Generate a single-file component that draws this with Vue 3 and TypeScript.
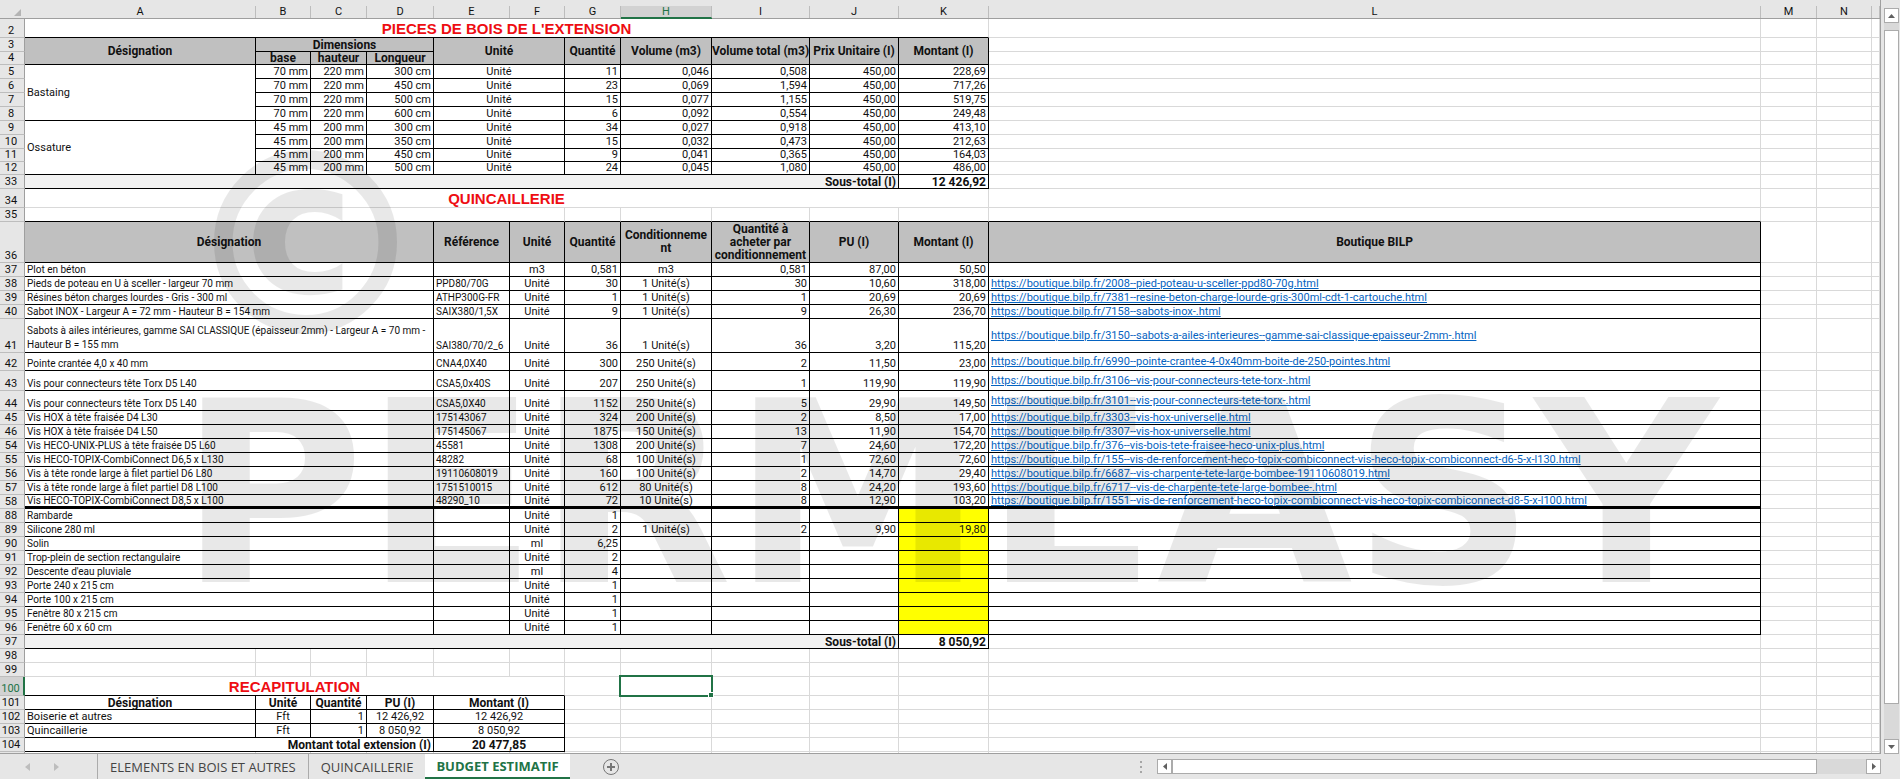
<script setup lang="ts">
import { ref } from 'vue'

interface Cell {
  t?: string
  href?: boolean
  cs?: number
  rs?: number
  c?: string
}

interface Row {
  n: number
  h: number
  cells: Cell[]
}

const columns = ['A', 'B', 'C', 'D', 'E', 'F', 'G', 'H', 'I', 'J', 'K', 'L', 'M', 'N', '']
const base = 'https://boutique.bilp.fr/'

const blank = (count: number, c = ''): Cell[] => Array.from({ length: count }, () => ({ c }))
const tail = (): Cell[] => blank(3)
const head = (t: string, extra: Cell = {}): Cell => ({ t, c: 'k head', ...extra })

const rows: Row[] = []

rows.push({ n: 2, h: 19, cells: [{ t: "PIECES DE BOIS DE L'EXTENSION", cs: 11, c: 'title kb' }, ...blank(4)] })
rows.push({
  n: 3,
  h: 14,
  cells: [
    head('Désignation', { rs: 2 }),
    head('Dimensions', { cs: 3 }),
    head('Unité', { cs: 2, rs: 2 }),
    head('Quantité', { rs: 2 }),
    head('Volume (m3)', { rs: 2 }),
    head('Volume total (m3)', { rs: 2 }),
    head('Prix Unitaire (I)', { rs: 2 }),
    head('Montant (I)', { rs: 2 }),
    ...blank(4),
  ],
})
rows.push({ n: 4, h: 13, cells: [head('base'), head('hauteur'), head('Longueur'), ...blank(4)] })

const timber: [number, number, string[]][] = [
  [5, 14, ['70 mm', '220 mm', '300 cm', '11', '0,046', '0,508', '450,00', '228,69']],
  [6, 14, ['70 mm', '220 mm', '450 cm', '23', '0,069', '1,594', '450,00', '717,26']],
  [7, 14, ['70 mm', '220 mm', '500 cm', '15', '0,077', '1,155', '450,00', '519,75']],
  [8, 14, ['70 mm', '220 mm', '600 cm', '6', '0,092', '0,554', '450,00', '249,48']],
  [9, 14, ['45 mm', '200 mm', '300 cm', '34', '0,027', '0,918', '450,00', '413,10']],
  [10, 14, ['45 mm', '200 mm', '350 cm', '15', '0,032', '0,473', '450,00', '212,63']],
  [11, 13, ['45 mm', '200 mm', '450 cm', '9', '0,041', '0,365', '450,00', '164,03']],
  [12, 13, ['45 mm', '200 mm', '500 cm', '24', '0,045', '1,080', '450,00', '486,00']],
]
for (const [n, h, v] of timber) {
  const cells: Cell[] = []
  if (n === 5) cells.push({ t: 'Bastaing', rs: 4, c: 'k mid' })
  if (n === 9) cells.push({ t: 'Ossature', rs: 4, c: 'k mid' })
  v.forEach((t, i) => {
    if (i === 3) cells.push({ t: 'Unité', cs: 2, c: 'k ctr' })
    cells.push({ t, c: 'k num' })
  })
  rows.push({ n, h, cells: [...cells, ...blank(4)] })
}

const subtotal = (n: number, amount: string): Row => ({
  n,
  h: 14,
  cells: [{ t: 'Sous-total (I)', cs: 10, c: 'k num bold shade' }, { t: amount, c: 'k num bold' }, ...blank(4)],
})
rows.push(subtotal(33, '12 426,92'))
rows.push({ n: 34, h: 19, cells: [{ t: 'QUINCAILLERIE', cs: 11, c: 'title' }, ...blank(4)] })
rows.push({ n: 35, h: 14, cells: [{ cs: 6, c: 'kb' }, ...blank(6, 'kb'), ...tail()] })
rows.push({
  n: 36,
  h: 41,
  cells: [
    head('Désignation', { cs: 4 }),
    head('Référence'),
    head('Unité'),
    head('Quantité'),
    head('Conditionneme\nnt', { c: 'k head tall' }),
    head('Quantité à\nacheter par\nconditionnement', { c: 'k head tall' }),
    head('PU (I)'),
    head('Montant (I)'),
    head('Boutique BILP'),
    ...tail(),
  ],
})

const hardware: [number, number, ...string[]][] = [
  [37, 14, 'Plot en béton', '', 'm3', '0,581', 'm3', '0,581', '87,00', '50,50', ''],
  [38, 14, 'Pieds de poteau en U à sceller - largeur 70 mm', 'PPD80/70G', 'Unité', '30', '1 Unité(s)', '30', '10,60', '318,00', '2008--pied-poteau-u-sceller-ppd80-70g.html'],
  [39, 14, 'Résines béton charges lourdes - Gris - 300 ml', 'ATHP300G-FR', 'Unité', '1', '1 Unité(s)', '1', '20,69', '20,69', '7381--resine-beton-charge-lourde-gris-300ml-cdt-1-cartouche.html'],
  [40, 14, 'Sabot INOX - Largeur A = 72 mm - Hauteur B = 154 mm', 'SAIX380/1,5X', 'Unité', '9', '1 Unité(s)', '9', '26,30', '236,70', '7158--sabots-inox-.html'],
  [41, 34, 'Sabots à ailes intérieures, gamme SAI CLASSIQUE (épaisseur 2mm) - Largeur A = 70 mm -\nHauteur B = 155 mm', 'SAI380/70/2_6', 'Unité', '36', '1 Unité(s)', '36', '3,20', '115,20', '3150--sabots-a-ailes-interieures--gamme-sai-classique-epaisseur-2mm-.html'],
  [42, 18, 'Pointe crantée 4,0 x 40 mm', 'CNA4,0X40', 'Unité', '300', '250 Unité(s)', '2', '11,50', '23,00', '6990--pointe-crantee-4-0x40mm-boite-de-250-pointes.html'],
  [43, 20, 'Vis pour connecteurs tête Torx D5 L40', 'CSA5,0x40S', 'Unité', '207', '250 Unité(s)', '1', '119,90', '119,90', '3106--vis-pour-connecteurs-tete-torx-.html'],
  [44, 20, 'Vis pour connecteurs tête Torx D5 L40', 'CSA5,0X40', 'Unité', '1152', '250 Unité(s)', '5', '29,90', '149,50', '3101--vis-pour-connecteurs-tete-torx-.html'],
  [45, 14, 'Vis HOX à tête fraisée D4 L30', '175143067', 'Unité', '324', '200 Unité(s)', '2', '8,50', '17,00', '3303--vis-hox-universelle.html'],
  [46, 14, 'Vis HOX à tête fraisée D4 L50', '175145067', 'Unité', '1875', '150 Unité(s)', '13', '11,90', '154,70', '3307--vis-hox-universelle.html'],
  [54, 14, 'Vis HECO-UNIX-PLUS à tête fraisée D5 L60', '45581', 'Unité', '1308', '200 Unité(s)', '7', '24,60', '172,20', '376--vis-bois-tete-fraisee-heco-unix-plus.html'],
  [55, 14, 'Vis HECO-TOPIX-CombiConnect D6,5 x L130', '48282', 'Unité', '68', '100 Unité(s)', '1', '72,60', '72,60', '155--vis-de-renforcement-heco-topix-combiconnect-vis-heco-topix-combiconnect-d6-5-x-l130.html'],
  [56, 14, 'Vis à tête ronde large à filet partiel D6 L80', '19110608019', 'Unité', '160', '100 Unité(s)', '2', '14,70', '29,40', '6687--vis-charpente-tete-large-bombee-19110608019.html'],
  [57, 14, 'Vis à tête ronde large à filet partiel D8 L100', '1751510015', 'Unité', '612', '80 Unité(s)', '8', '24,20', '193,60', '6717--vis-de-charpente-tete-large-bombee-.html'],
  [58, 14, 'Vis HECO-TOPIX-CombiConnect D8,5 x L100', '48290_10', 'Unité', '72', '10 Unité(s)', '8', '12,90', '103,20', '1551--vis-de-renforcement-heco-topix-combiconnect-vis-heco-topix-combiconnect-d8-5-x-l100.html'],
  [88, 14, 'Rambarde', '', 'Unité', '1', '', '', '', '', ''],
  [89, 14, 'Silicone 280 ml', '', 'Unité', '2', '1 Unité(s)', '2', '9,90', '19,80', ''],
  [90, 14, 'Solin', '', 'ml', '6,25', '', '', '', '', ''],
  [91, 14, 'Trop-plein de section rectangulaire', '', 'Unité', '2', '', '', '', '', ''],
  [92, 14, "Descente d'eau pluviale", '', 'ml', '4', '', '', '', '', ''],
  [93, 14, 'Porte 240 x 215 cm', '', 'Unité', '1', '', '', '', '', ''],
  [94, 14, 'Porte 100 x 215 cm', '', 'Unité', '1', '', '', '', '', ''],
  [95, 14, 'Fenêtre 80 x 215 cm', '', 'Unité', '1', '', '', '', '', ''],
  [96, 14, 'Fenêtre 60 x 60 cm', '', 'Unité', '1', '', '', '', '', ''],
]
for (const [n, h, ...v] of hardware) {
  const k = n === 58 ? 'k thick' : 'k'
  const [name, code, unit, qty, pack, buy, pu, sum, link] = v
  rows.push({
    n,
    h,
    cells: [
      { t: name, cs: 4, c: k + ' name' + (n === 41 ? ' wrap' : '') },
      { t: code, c: k + ' name' },
      { t: unit, c: k + ' ctr' },
      { t: qty, c: k + ' num' },
      { t: pack, c: k + ' ctr' },
      { t: buy, c: k + ' num' },
      { t: pu, c: k + ' num' },
      { t: sum, c: k + ' num' + (n >= 88 ? ' yellow' : '') },
      link ? { t: base + link, href: true, c: k + ' mid' } : { c: k },
      ...tail(),
    ],
  })
}

rows.push(subtotal(97, '8 050,92'))
rows.push({ n: 98, h: 14, cells: blank(15) })
rows.push({ n: 99, h: 14, cells: blank(15) })
rows.push({ n: 100, h: 19, cells: [{ t: 'RECAPITULATION', cs: 6, c: 'title kb' }, {}, { c: 'active' }, ...blank(7)] })
rows.push({
  n: 101,
  h: 14,
  cells: [
    ...['Désignation', 'Unité', 'Quantité', 'PU (I)'].map((t) => ({ t, c: 'k ctr bold' })),
    { t: 'Montant (I)', cs: 2, c: 'k ctr bold' },
    ...blank(9),
  ],
})
for (const [n, name, sum] of [
  [102, 'Boiserie et autres', '12 426,92'],
  [103, 'Quincaillerie', '8 050,92'],
] as [number, string, string][]) {
  rows.push({
    n,
    h: 14,
    cells: [
      { t: name, c: 'k' },
      { t: 'Fft', c: 'k ctr' },
      { t: '1', c: 'k num' },
      { t: sum, c: 'k ctr' },
      { t: sum, cs: 2, c: 'k ctr' },
      ...blank(9),
    ],
  })
}
rows.push({
  n: 104,
  h: 14,
  cells: [
    { t: 'Montant total extension (I)', cs: 4, c: 'k num bold' },
    { t: '20 477,85', cs: 2, c: 'k ctr bold' },
    ...blank(9),
  ],
})

const tabs = ['ELEMENTS EN BOIS ET AUTRES', 'QUINCAILLERIE', 'BUDGET ESTIMATIF']
const current = ref('BUDGET ESTIMATIF')
</script>

<template>
  <div class="book">
    <div class="work">
      <div class="grid">
        <table>
          <colgroup>
            <col class="w-row" />
            <col v-for="(c, i) in columns" :key="i" :class="'w-' + (c || 'rest')" />
          </colgroup>
          <thead>
            <tr>
              <td class="corner">
                <svg width="7" height="7" viewBox="0 0 7 7"><path d="M7 0V7H0Z" fill="#b4b4b4" /></svg>
              </td>
              <th v-for="(c, i) in columns" :key="i" scope="col" :class="{ on: c === 'H' }">
                <span>{{ c }}</span>
              </th>
            </tr>
          </thead>
          <tbody>
            <tr v-for="r in rows" :key="r.n" :style="{ height: r.h + 'px' }">
              <th scope="row" :class="{ on: r.n === 100 }">{{ r.n }}</th>
              <td v-for="(c, i) in r.cells" :key="i" :colspan="c.cs" :rowspan="c.rs" :class="c.c">
                <a v-if="c.href" :href="c.t">{{ c.t }}</a>
                <template v-else>{{ c.t }}</template>
              </td>
            </tr>
            <tr class="last">
              <th></th>
              <td v-for="i in 15" :key="i"></td>
            </tr>
          </tbody>
        </table>
        <div class="mark copy">©</div>
        <div class="mark word">PERMEASY</div>
      </div>
      <div class="vbar">
        <button aria-label="Haut"><svg width="7" height="4" viewBox="0 0 7 4"><path d="M0 4L3.5 0L7 4Z" /></svg></button>
        <div class="track"><div class="thumb"></div></div>
        <button aria-label="Bas"><svg width="7" height="4" viewBox="0 0 7 4"><path d="M0 0L3.5 4L7 0Z" /></svg></button>
      </div>
    </div>
    <div class="foot">
      <div class="arrows">
        <button aria-label="Feuille précédente"><svg width="5" height="8" viewBox="0 0 5 8"><path d="M5 0L0 4L5 8Z" /></svg></button>
        <button aria-label="Feuille suivante"><svg width="5" height="8" viewBox="0 0 5 8"><path d="M0 0L5 4L0 8Z" /></svg></button>
      </div>
      <nav>
        <button v-for="t in tabs" :key="t" class="tab" :class="{ sel: t === current }" @click="current = t">{{ t }}</button>
      </nav>
      <button class="add" aria-label="Nouvelle feuille">
        <svg width="18" height="18" viewBox="0 0 18 18" fill="none" stroke="#767676">
          <circle cx="9" cy="9" r="7.5" />
          <path d="M9 5V13M5 9H13" stroke-width="2" />
        </svg>
      </button>
      <div class="hbar">
        <svg class="grip" width="2" height="12" viewBox="0 0 2 12" fill="#a6a6a6"><path d="M0 0h2v2H0zM0 5h2v2H0zM0 10h2v2H0z" /></svg>
        <button aria-label="Gauche"><svg width="4" height="7" viewBox="0 0 4 7"><path d="M4 0L0 3.5L4 7Z" /></svg></button>
        <div class="track"><div class="thumb"></div></div>
        <button aria-label="Droite"><svg width="4" height="7" viewBox="0 0 4 7"><path d="M0 0L4 3.5L0 7Z" /></svg></button>
      </div>
    </div>
  </div>
</template>

<style>
body {
  margin: 0;
}
</style>

<style scoped>
.book {
  display: flex;
  flex-direction: column;
  height: 100vh;
  overflow: hidden;
  background: #e6e6e6;
  font-family: Roboto, sans-serif;
  font-size: 11px;
  line-height: 12px;
  color: #111;
}
button {
  margin: 0;
  padding: 0;
  border: 0;
  background: none;
  font: inherit;
  color: inherit;
  display: flex;
  align-items: center;
  justify-content: center;
}
.work {
  flex: 1;
  min-height: 0;
  display: flex;
}
.grid {
  flex: 1;
  min-width: 0;
  position: relative;
  overflow: hidden;
  border-right: 1px solid #9f9f9f;
  border-bottom: 1px solid #9f9f9f;
  box-sizing: border-box;
}
table {
  width: 100%;
  table-layout: fixed;
  border-collapse: separate;
  border-spacing: 0;
  background: #fff;
}
.w-row { width: 25px; }
.w-A { width: 231px; }
.w-B, .w-F, .w-N { width: 55px; }
.w-C, .w-G, .w-M { width: 56px; }
.w-D { width: 67px; }
.w-E { width: 76px; }
.w-H { width: 91px; }
.w-I { width: 98px; }
.w-J { width: 89px; }
.w-K { width: 90px; }
.w-rest { width: 8px; }

td,
th {
  box-sizing: border-box;
  padding: 0 2px;
  border-right: 1px solid #d9d9d9;
  border-bottom: 1px solid #d9d9d9;
  vertical-align: bottom;
  white-space: nowrap;
  font-weight: 400;
}
thead tr {
  height: 19px;
}
thead th,
thead td {
  padding: 6px 0 0;
  background: #e6e6e6;
  border-right: 0;
  border-bottom-color: #9f9f9f;
}
thead th span {
  display: block;
  height: 12px;
  border-right: 1px solid #bdbdbd;
}
thead .on {
  background: linear-gradient(#e6e6e6 6px, #d2d2d2 6px);
  border-bottom-color: #217346;
  color: #217346;
}
thead .on span {
  box-sizing: border-box;
  border-bottom: 1px solid #217346;
}
.corner svg {
  display: block;
  margin: 0 4px 2px auto;
}
tbody th {
  padding: 0 2px 0 0;
  background: #e6e6e6;
  border-right-color: #9f9f9f;
  border-bottom-color: #bdbdbd;
  text-align: center;
}
tbody th.on {
  background: #d2d2d2;
  border-right: 2px solid #217346;
  color: #217346;
}
.k {
  border-color: #000;
}
.kb {
  border-bottom-color: #000;
}
.head {
  padding: 0;
  background: #c0c0c0;
  text-align: center;
  vertical-align: middle;
  font-size: 12px;
  font-weight: 700;
  white-space: pre;
}
.tall {
  line-height: 13px;
}
.title {
  font-family: 'Liberation Sans', Arial, sans-serif;
  font-size: 15px;
  line-height: 17px;
  font-weight: 700;
  color: #ee0d12;
  text-align: center;
  vertical-align: middle;
}
.name {
  font-size: 10px;
}
.mid {
  vertical-align: middle;
}
.num {
  text-align: right;
}
.ctr {
  text-align: center;
}
.bold {
  font-size: 12px;
  font-weight: 700;
}
.shade {
  background: #f2f2f2;
}
.yellow {
  background: #ff0;
}
.wrap {
  white-space: pre;
  line-height: 14px;
}
.thick {
  border-bottom-width: 3px;
  line-height: 11px;
}
.active {
  position: relative;
}
.active::before {
  content: '';
  position: absolute;
  inset: -2px;
  border: 2px solid #217346;
}
.active::after {
  content: '';
  position: absolute;
  right: -3px;
  bottom: -3px;
  width: 4px;
  height: 4px;
  background: #217346;
  border: 1px solid #fff;
}
a {
  color: #0563c1;
  text-decoration: underline;
}
.last {
  height: 14px;
}
.mark {
  position: absolute;
  left: 179px;
  color: rgba(0, 0, 0, 0.09);
  font-family: 'DejaVu Sans', sans-serif;
  font-size: 253px;
  font-weight: 700;
  line-height: 1;
  white-space: nowrap;
  pointer-events: none;
}
.word {
  top: 368px;
}
.copy {
  top: 120px;
}
.vbar {
  width: 15px;
  margin: 8px 1px 0 3px;
  display: flex;
  flex-direction: column;
}
.vbar button,
.hbar button {
  box-sizing: border-box;
  width: 15px;
  height: 15px;
  background: #fff;
  border: 1px solid #ababab;
  fill: #606060;
}
.track {
  flex: 1;
  background: #d9d9d9;
}
.thumb {
  box-sizing: border-box;
  background: #fff;
  border: 1px solid #ababab;
}
.vbar .track {
  padding-top: 7px;
}
.vbar .thumb {
  height: 95%;
}
.foot {
  height: 25px;
  flex: none;
  display: flex;
  align-items: stretch;
  font-family: 'Open Sans', sans-serif;
  font-size: 13px;
  color: #444;
}
.arrows {
  display: flex;
  gap: 24px;
  padding: 0 38px 0 25px;
  fill: #bdbdbd;
}
nav {
  display: flex;
}
.tab {
  padding: 0 12px;
  border-left: 1px solid #ababab;
}
.tab.sel {
  padding: 0 11px;
  background: #fff;
  border-bottom: 2px solid #217346;
  border-left: 0;
  color: #217346;
  font-weight: 700;
}
.add {
  margin-left: 32px;
}
.hbar {
  width: 741px;
  margin-left: auto;
  margin-right: 19px;
  display: flex;
  align-items: center;
}
.grip {
  margin-right: 15px;
}
.hbar .track {
  height: 15px;
}
.hbar .thumb {
  width: 93%;
  height: 15px;
}
</style>
